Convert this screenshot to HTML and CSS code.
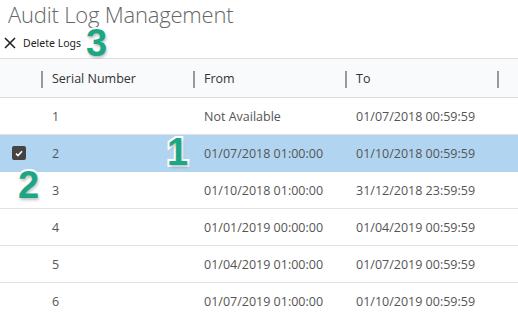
FILE: index.html
```html
<!DOCTYPE html>
<html lang="en">
<head>
    <meta charset="UTF-8">
    <title>Audit Log Management</title>
    <link rel="stylesheet" href="styles.css">
</head>
<body>
    <div class="page">
        <h1 class="title">Audit Log Management</h1>

        <div class="toolbar">
            <button class="tool-btn">
                <svg class="icon-x" width="12" height="12" viewBox="0 0 12 12">
                    <path d="M1 1 L11 11 M11 1 L1 11" stroke="#222" stroke-width="1.6" fill="none"/>
                </svg>
                <span>Delete Logs</span>
            </button>
            <span class="callout callout-3">3</span>
        </div>

        <table class="log-table">
            <colgroup>
                <col class="col-check">
                <col class="col-data">
                <col class="col-data">
                <col class="col-data">
                <col>
            </colgroup>
            <thead>
                <tr>
                    <th></th>
                    <th><span class="sep"></span>Serial Number</th>
                    <th><span class="sep"></span>From</th>
                    <th><span class="sep"></span>To</th>
                    <th><span class="sep"></span></th>
                </tr>
            </thead>
            <tbody>
                <tr>
                    <td></td>
                    <td>1</td>
                    <td>Not Available</td>
                    <td>01/07/2018 00:59:59</td>
                    <td></td>
                </tr>
                <tr class="selected">
                    <td><span class="checkbox"><svg width="8" height="7" viewBox="0 0 8 7"><path d="M1 3.6 L3 5.5 L7 1.2" stroke="#fff" stroke-width="1.6" fill="none"/></svg></span></td>
                    <td>2</td>
                    <td>01/07/2018 01:00:00<span class="callout callout-1">1</span></td>
                    <td>01/10/2018 00:59:59</td>
                    <td></td>
                </tr>
                <tr>
                    <td><span class="callout callout-2">2</span></td>
                    <td>3</td>
                    <td>01/10/2018 01:00:00</td>
                    <td>31/12/2018 23:59:59</td>
                    <td></td>
                </tr>
                <tr>
                    <td></td>
                    <td>4</td>
                    <td>01/01/2019 00:00:00</td>
                    <td>01/04/2019 00:59:59</td>
                    <td></td>
                </tr>
                <tr>
                    <td></td>
                    <td>5</td>
                    <td>01/04/2019 01:00:00</td>
                    <td>01/07/2019 00:59:59</td>
                    <td></td>
                </tr>
                <tr>
                    <td></td>
                    <td>6</td>
                    <td>01/07/2019 01:00:00</td>
                    <td>01/10/2019 00:59:59</td>
                    <td></td>
                </tr>
            </tbody>
        </table>
    </div>
</body>
</html>
```

FILE: styles.css
```css
body {
    margin: 0;
    background: #fff;
    font-family: "Open Sans", "Noto Sans", sans-serif;
    overflow: hidden;
}

.page {
    width: 518px;
}

.title {
    margin: 0;
    padding: 0 0 0 8px;
    height: 30px;
    line-height: 28px;
    font-size: 22px;
    font-weight: 300;
    color: #666;
    letter-spacing: -0.2px;
}

.toolbar {
    position: relative;
    height: 28px;
    display: flex;
    align-items: center;
}

.tool-btn {
    display: flex;
    align-items: center;
    gap: 7px;
    border: 0;
    background: none;
    padding: 0 0 0 4px;
    font-family: "Noto Sans", sans-serif;
    font-size: 10.5px;
    color: #222;
    margin-top: -2px;
}

/* table */
.log-table {
    width: 518px;
    border-collapse: collapse;
    table-layout: fixed;
    font-size: 12.5px;
    color: #555;
}

.col-check {
    width: 41px;
}

.col-data {
    width: 152px;
}

.log-table th {
    position: relative;
    height: 38px;
    padding: 0 0 0 11px;
    text-align: left;
    font-weight: 500;
    color: #333;
    background: #f9fafc;
    border-top: 1px solid #ddd;
    border-bottom: 1px solid #ddd;
    white-space: nowrap;
}

.sep {
    position: absolute;
    left: 0;
    top: 12px;
    width: 2px;
    height: 17px;
    background: #999;
}

.log-table td {
    position: relative;
    height: 36px;
    padding: 0 0 0 11px;
    border-bottom: 1px solid #e2e2e2;
    white-space: nowrap;
}

.log-table td:first-child {
    padding-left: 12px;
}

.log-table tr.selected td {
    background: #b1d4f0;
    border-bottom-color: #b1d4f0;
}

.checkbox {
    display: flex;
    align-items: center;
    justify-content: center;
    width: 14px;
    height: 14px;
    border-radius: 2px;
    background: #444;
}

/* numbered callouts */
.callout {
    position: absolute;
    font-family: "Liberation Sans", sans-serif;
    font-weight: bold;
    font-size: 38px;
    line-height: 1;
    color: #1ba785;
    -webkit-text-stroke: 4px #fff;
    paint-order: stroke fill;
    text-shadow: 1px 2px 3px rgba(0, 0, 0, 0.25);
}

.callout-3 {
    left: 86px;
    top: -6px;
}

.callout-1 {
    left: -26px;
    top: -2px;
}

.callout-2 {
    left: 18px;
    top: -6px;
}
```
